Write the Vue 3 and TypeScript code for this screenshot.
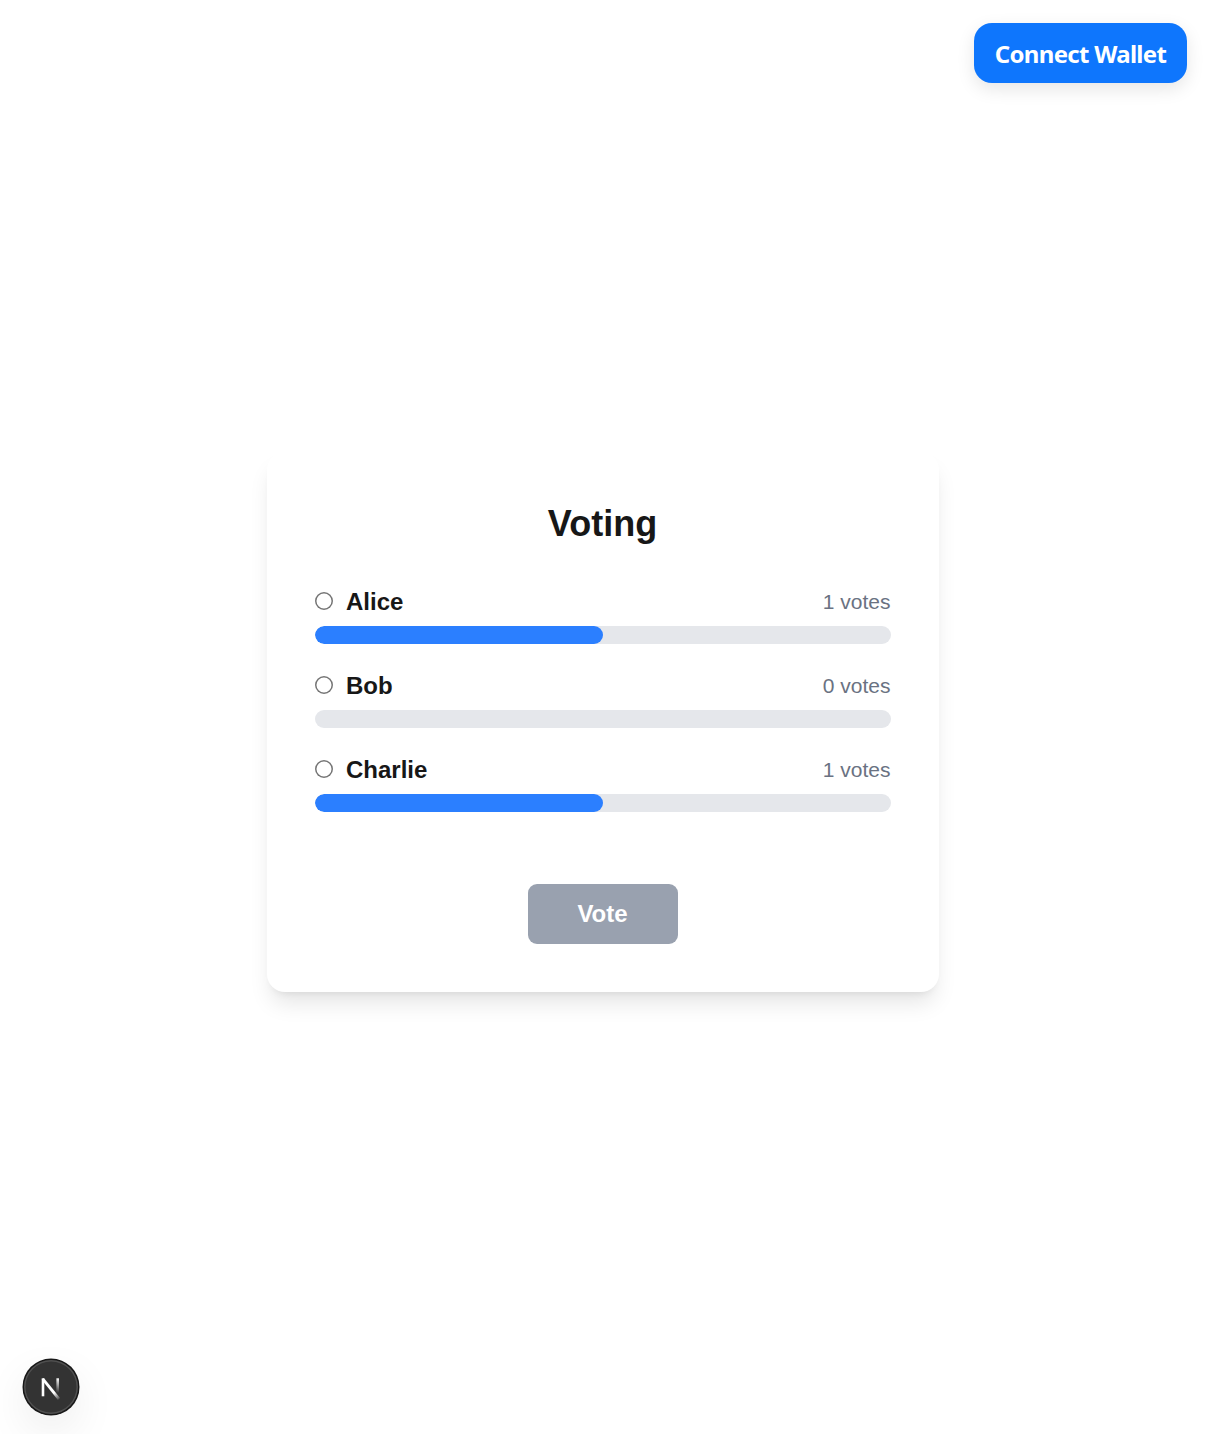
<script setup lang="ts">
interface Candidate {
  name: string
  votes: number
}

const candidates: Candidate[] = [
  { name: 'Alice', votes: 1 },
  { name: 'Bob', votes: 0 },
  { name: 'Charlie', votes: 1 },
]

const total = candidates.reduce((sum, c) => sum + c.votes, 0)
const share = (c: Candidate): string => `${(c.votes / total) * 100}%`
</script>

<template>
  <div class="page">
    <header class="top">
      <button class="connect" type="button">Connect Wallet</button>
    </header>
    <main class="main">
      <section class="card">
        <h1 class="title">Voting</h1>
        <div class="list">
          <div v-for="c in candidates" :key="c.name" class="candidate">
            <div class="row">
              <label class="choice">
                <input class="radio" type="radio" name="candidate" :value="c.name" />
                <span class="name">{{ c.name }}</span>
              </label>
              <span class="votes">{{ c.votes }} votes</span>
            </div>
            <div class="track"><div class="fill" :style="{ width: share(c) }"></div></div>
          </div>
        </div>
        <button class="vote" type="button">Vote</button>
      </section>
    </main>
    <footer class="bottom">
      <div class="badge">
        <svg width="54" height="54" viewBox="0 0 54 54" fill="none">
          <defs>
            <linearGradient id="diagonal" x1="28" y1="29" x2="35.5" y2="38.5" gradientUnits="userSpaceOnUse">
              <stop offset="0" stop-color="#fff" />
              <stop offset="0.35" stop-color="#fff" />
              <stop offset="1" stop-color="#fff" stop-opacity="0.15" />
            </linearGradient>
            <linearGradient id="stem" x1="34" y1="18" x2="34" y2="33" gradientUnits="userSpaceOnUse">
              <stop offset="0" stop-color="#fff" />
              <stop offset="1" stop-color="#fff" stop-opacity="0" />
            </linearGradient>
          </defs>
          <path d="M19 36.3V18.3" stroke="#fff" stroke-width="2.6" />
          <path d="M18.8 18.8L35 39" stroke="url(#diagonal)" stroke-width="2.8" />
          <path d="M33.7 18.3V35" stroke="url(#stem)" stroke-width="2.6" />
        </svg>
      </div>
    </footer>
  </div>
</template>

<style>
body {
  margin: 0;
  background: #fff;
}
</style>

<style scoped>
.page {
  box-sizing: border-box;
  height: 1434px;
  display: flex;
  flex-direction: column;
  overflow: hidden;
  background: #fff;
  color: #171717;
  font-family: "Liberation Sans", Arial, sans-serif;
}
.top {
  display: flex;
  justify-content: flex-end;
  padding: 23px 18px 0 0;
}
.connect {
  width: 213px;
  height: 60px;
  padding: 1px 0 0;
  border: 0;
  border-radius: 18px;
  background: #0e76fd;
  color: #fff;
  font: 700 24px "Noto Sans", "Open Sans", sans-serif;
  letter-spacing: -0.7px;
  white-space: nowrap;
  box-shadow: 0 6px 18px rgba(0, 0, 0, 0.1);
}
.main {
  flex: 1;
  display: flex;
  justify-content: center;
  align-items: flex-start;
  padding-top: 369px;
}
.card {
  box-sizing: border-box;
  width: 672px;
  height: 540px;
  margin-left: 1px;
  padding: 48px;
  display: flex;
  flex-direction: column;
  align-items: center;
  border-radius: 18px;
  background: #fff;
  box-shadow: 0 15px 22.5px -4.5px rgba(0, 0, 0, 0.1), 0 6px 9px -6px rgba(0, 0, 0, 0.1);
}
.title {
  margin: 0 0 36px;
  padding-right: 1px;
  font-size: 36px;
  line-height: 48px;
  font-weight: 700;
}
.list {
  width: 100%;
  display: flex;
  flex-direction: column;
  gap: 24px;
}
.row {
  height: 36px;
  display: flex;
  align-items: center;
  justify-content: space-between;
  margin-bottom: 6px;
}
.choice {
  display: flex;
  align-items: center;
}
.radio {
  appearance: none;
  box-sizing: border-box;
  width: 18px;
  height: 18px;
  margin: 0 13px 2px 0;
  border: 0;
  border-radius: 50%;
  background: #fff;
  box-shadow: inset 0 0 0 1.5px #767676;
}
.name {
  font-size: 24px;
  line-height: 36px;
  font-weight: 700;
}
.votes {
  padding-right: 0.5px;
  color: #6a7282;
  font-size: 21px;
  line-height: 30px;
}
.track {
  height: 18px;
  overflow: hidden;
  border-radius: 9px;
  background: #e5e7eb;
}
.fill {
  height: 100%;
  border-radius: 9px;
  background: #2b7fff;
}
.vote {
  width: 150px;
  height: 60px;
  margin-top: 72px;
  padding: 0 1px 0 0;
  flex: none;
  border: 0;
  border-radius: 9px;
  background: #99a1af;
  color: #fff;
  font: 700 24px "Liberation Sans", Arial, sans-serif;
}
.bottom {
  padding: 0 0 20px 24px;
}
.badge {
  width: 54px;
  height: 54px;
  border-radius: 50%;
  background: #333;
  box-shadow: 0 0 0 1.5px #171717, inset 0 0 0 1.5px rgba(255, 255, 255, 0.14), 0 16px 48px -8px rgba(0, 0, 0, 0.16);
}
.badge svg {
  display: block;
}
</style>
